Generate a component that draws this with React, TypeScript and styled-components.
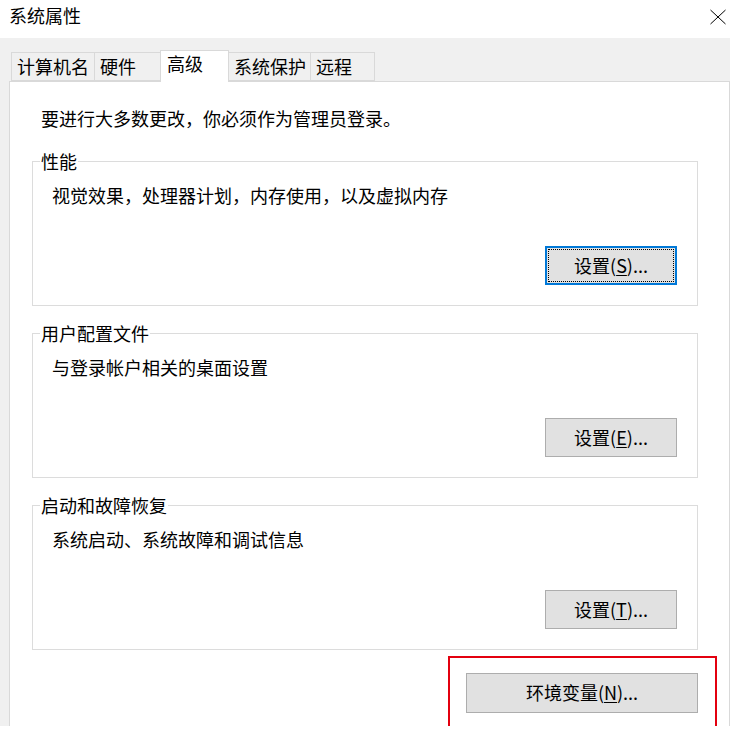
import React from "react";
import styled, { createGlobalStyle } from "styled-components";

const GlobalStyle = createGlobalStyle`
  html, body {
    margin: 0;
    padding: 0;
    background: #fff;
  }
  body {
    font-family: "Noto Sans CJK SC", "Noto Sans", sans-serif;
    color: #000;
  }
`;

const Window = styled.div`
  position: relative;
  width: 730px;
  height: 755px;
  background: #fff;
  overflow: hidden;
`;

const TitleBar = styled.div`
  display: flex;
  justify-content: space-between;
  align-items: flex-start;
  height: 38px;
  padding: 3px 3px 0 9px;
  box-sizing: border-box;
  font-size: 18px;
  line-height: 24px;
`;

const CloseButton = styled.div`
  width: 16px;
  height: 16px;
  margin-top: 6px;
  margin-right: 1px;

  > svg {
    display: block;
  }
`;

const Body = styled.div`
  height: 688px;
  background: #f0f0f0;
  padding: 12px 0 0 9px;
  box-sizing: border-box;
  overflow: hidden;
`;

const TabStrip = styled.div`
  display: flex;
  align-items: flex-end;
  height: 31px;
  padding-left: 2px;
  position: relative;
  z-index: 1;
`;

const Tab = styled.div<{ $width: number; $active?: boolean }>`
  width: ${(p) => p.$width}px;
  height: ${(p) => (p.$active ? 32 : 29)}px;
  margin-left: -1px;
  margin-bottom: ${(p) => (p.$active ? -1 : 0)}px;
  box-sizing: border-box;
  border: 1px solid #d9d9d9;
  border-bottom: ${(p) => (p.$active ? "none" : "1px solid #d9d9d9")};
  background: ${(p) => (p.$active ? "#fff" : "#f0f0f0")};
  padding-left: ${(p) => (p.$active ? 6 : 5)}px;
  padding-top: ${(p) => (p.$active ? 0 : 1)}px;
  font-size: 18px;
  line-height: 24px;
  white-space: nowrap;
  position: relative;
  z-index: ${(p) => (p.$active ? 2 : 1)};

  &:first-child {
    margin-left: 0;
  }
`;

const Panel = styled.div`
  position: relative;
  width: 721px;
  height: 700px;
  box-sizing: border-box;
  background: #fff;
  border: 1px solid #d9d9d9;
  padding: 24px 0 0 0;
`;

const Intro = styled.div`
  padding-left: 31px;
  font-size: 18px;
  line-height: 24px;
  margin-bottom: 19px;
`;

const Group = styled.fieldset`
  width: 666px;
  margin: 0 0 15px 22px;
  padding: 10px 20px 20px 19px;
  box-sizing: border-box;
  border: 1px solid #dcdcdc;
  min-inline-size: 0;
  display: flex;
  flex-direction: column;

  > legend {
    margin-left: -12px;
    padding: 0 1px;
    font-size: 18px;
    line-height: 24px;
  }
`;

const Description = styled.div`
  font-size: 18px;
  line-height: 24px;
  margin-bottom: 39px;
`;

const ButtonRow = styled.div`
  display: flex;
  justify-content: flex-end;
`;

const Button = styled.button<{ $width?: number; $height?: number; $focused?: boolean }>`
  width: ${(p) => p.$width ?? 132}px;
  height: ${(p) => p.$height ?? 39}px;
  box-sizing: border-box;
  background: #e1e1e1;
  border: ${(p) => (p.$focused ? "2px solid #0078d7" : "1px solid #adadad")};
  outline: ${(p) => (p.$focused ? "1px dotted #000" : "none")};
  outline-offset: -4px;
  font-family: "Noto Sans CJK SC", "Noto Sans", sans-serif;
  font-size: 18px;
  line-height: 24px;
  color: #000;
  padding: 0 0 2px;
  cursor: default;

  > u {
    text-underline-offset: 2px;
  }
`;

const EnvRow = styled.div`
  display: flex;
  justify-content: flex-end;
  width: 688px;
  margin-top: 23px;
`;

const Highlight = styled.div`
  position: absolute;
  left: 438px;
  top: 574px;
  width: 269px;
  height: 120px;
  box-sizing: border-box;
  border: 2px solid #e3000f;
  pointer-events: none;
`;

const tabs = [
  { label: "计算机名", width: 84 },
  { label: "硬件", width: 67 },
  { label: "高级", width: 69, active: true },
  { label: "系统保护", width: 83 },
  { label: "远程", width: 65 },
];

const groups = [
  { title: "性能", text: "视觉效果，处理器计划，内存使用，以及虚拟内存", key: "S", focused: true },
  { title: "用户配置文件", text: "与登录帐户相关的桌面设置", key: "E" },
  { title: "启动和故障恢复", text: "系统启动、系统故障和调试信息", key: "T" },
];

export default function App() {
  return (
    <>
      <GlobalStyle />
      <Window>
        <TitleBar>
          <span>系统属性</span>
          <CloseButton>
            <svg width="16" height="16" viewBox="0 0 16 16">
              <path d="M0.5 1 L15.5 15 M15.5 1 L0.5 15" stroke="#000" strokeWidth="1" fill="none" />
            </svg>
          </CloseButton>
        </TitleBar>
        <Body>
          <TabStrip>
            {tabs.map((t) => (
              <Tab key={t.label} $width={t.width} $active={t.active}>
                {t.label}
              </Tab>
            ))}
          </TabStrip>
          <Panel>
            <Intro>要进行大多数更改，你必须作为管理员登录。</Intro>
            {groups.map((g) => (
              <Group key={g.title}>
                <legend>{g.title}</legend>
                <Description>{g.text}</Description>
                <ButtonRow>
                  <Button $focused={g.focused}>
                    设置(<u>{g.key}</u>)...
                  </Button>
                </ButtonRow>
              </Group>
            ))}
            <EnvRow>
              <Button $width={232} $height={40}>
                环境变量(<u>N</u>)...
              </Button>
            </EnvRow>
            <Highlight />
          </Panel>
        </Body>
      </Window>
    </>
  );
}
